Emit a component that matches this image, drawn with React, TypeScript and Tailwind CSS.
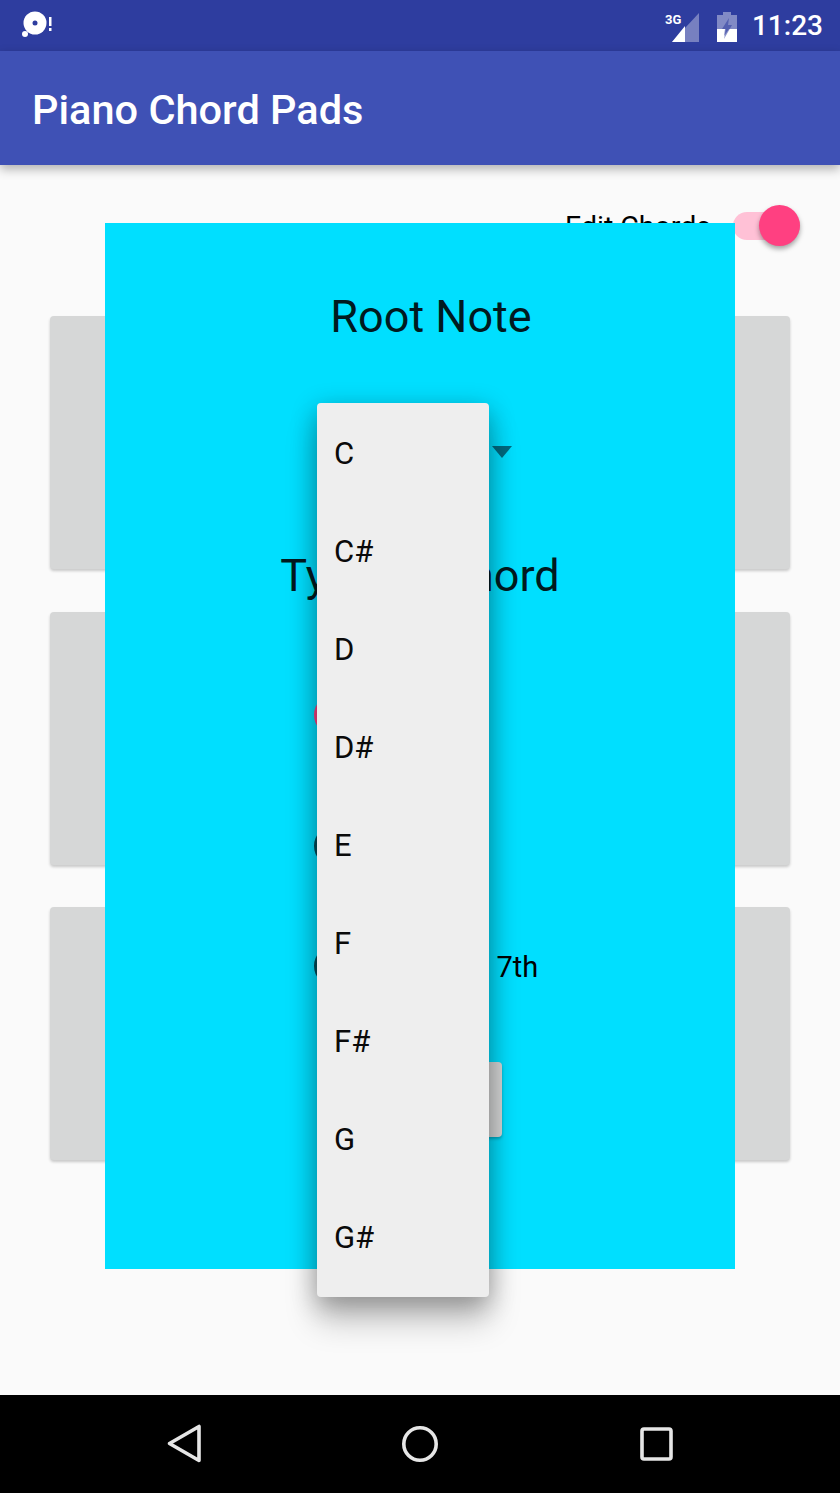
const notes = ['C', 'C#', 'D', 'D#', 'E', 'F', 'F#', 'G', 'G#']

function StatusIcons() {
  return (
    <div className="flex items-center">
      <svg width="35" height="30" viewBox="0 0 35 30" className="mt-[2px]">
        <path d="M34 1V30H7Z" fill="#fff" fillOpacity="0.35" />
        <path d="M20 14V30H7Z" fill="#fff" />
        <text x="0" y="12" fontSize="13" fontWeight="700" fill="#fff" fontFamily="Roboto, sans-serif">3G</text>
      </svg>
      <svg width="20" height="30" viewBox="0 0 20 30" className="ml-[17px] mt-[2px]">
        <path d="M6 0H14V3H20V30H0V3H6Z" fill="#fff" fillOpacity="0.4" />
        <path d="M0 17H8L7 24L12 17H20V30H0Z" fill="#fff" />
        <path d="M12 6L5 17H9L7 27L15 13H11Z" fill="#2e3d9f" fillOpacity="0.55" />
      </svg>
      <span className="ml-[15px] text-[28px] font-medium leading-none text-white">11:23</span>
    </div>
  )
}

function Radio({ active }: { active?: boolean }) {
  return (
    <span className={`flex h-[40px] w-[40px] shrink-0 items-center justify-center rounded-full border-[5px] ${active ? 'border-[#ff4081]' : 'border-[#004d5c]'}`}>
      {active && <span className="h-[20px] w-[20px] rounded-full bg-[#ff4081]" />}
    </span>
  )
}

export default function App() {
  return (
    <div className="relative flex h-[1493px] w-[840px] flex-col overflow-hidden font-['Roboto',sans-serif] text-black">
      <div className="flex h-[51px] items-center justify-between bg-[#2e3d9f] pl-[21px] pr-[17px]">
        <svg width="32" height="30" viewBox="0 0 32 30">
          <circle cx="14" cy="12" r="11.5" fill="#fff" />
          <circle cx="14" cy="12" r="2.5" fill="#2e3d9f" />
          <circle cx="4" cy="23" r="3" fill="#fff" />
          <rect x="28" y="6" width="2.5" height="9" fill="#fff" />
          <rect x="28" y="17" width="2.5" height="3" fill="#fff" />
        </svg>
        <StatusIcons />
      </div>

      <div className="z-10 flex h-[114px] items-center bg-[#3f51b5] pl-[32px] shadow-[0_4px_10px_rgba(0,0,0,0.3)]">
        <h1 className="mt-[5px] text-[41.5px] font-medium text-white">Piano Chord Pads</h1>
      </div>

      <main className="flex-1 bg-[#fafafa] px-[50px]">
        <div className="mt-[40px] flex h-[41px] items-center justify-end">
          <span className="pt-[4px] text-[28.5px]">Edit Chords</span>
          <div className="relative ml-[22px] -mr-[10px] h-[28px] w-[67px]">
            <div className="h-full w-full rounded-full bg-[#ffc1d6]" />
            <div className="absolute -top-[7px] right-0 h-[41px] w-[41px] rounded-full bg-[#ff4081] shadow-[0_3px_5px_rgba(0,0,0,0.35)]" />
          </div>
        </div>
        <div className="mt-[70px] flex flex-col">
          <div className="h-[253px] rounded-[4px] bg-[#d6d7d7] shadow-[0_2px_3px_rgba(0,0,0,0.2)]" />
          <div className="mt-[43px] h-[253px] rounded-[4px] bg-[#d6d7d7] shadow-[0_2px_3px_rgba(0,0,0,0.2)]" />
          <div className="mt-[42px] h-[253px] rounded-[4px] bg-[#d6d7d7] shadow-[0_2px_3px_rgba(0,0,0,0.2)]" />
        </div>
      </main>

      <div className="flex h-[98px] items-center bg-black pl-[166px]">
        <svg width="36" height="42" viewBox="0 0 36 42">
          <path d="M33 3.5V37.5L3.5 20.5Z" fill="none" stroke="#e6e6e6" strokeWidth="3.6" strokeLinejoin="round" />
        </svg>
        <svg width="38" height="38" viewBox="0 0 38 38" className="ml-[199px]">
          <circle cx="19" cy="19" r="16.2" fill="none" stroke="#e6e6e6" strokeWidth="3.6" />
        </svg>
        <svg width="34" height="38" viewBox="0 0 34 38" className="ml-[200px]">
          <rect x="3" y="4" width="29" height="30" rx="2" fill="none" stroke="#e6e6e6" strokeWidth="3.6" />
        </svg>
      </div>

      <div className="absolute left-[105px] top-[223px] z-20 flex h-[1046px] w-[630px] flex-col items-center bg-[#00dfff]">
        <p className="ml-[22px] mt-[66px] text-[45px] leading-[56px] text-[#001a20]">Root Note</p>
        <div className="ml-[164px] mt-[101px] h-0 w-0 border-x-[10px] border-t-[12px] border-x-transparent border-t-[#006a80]" />
        <p className="mt-[90px] text-[45px] leading-[56px] text-[#001a20]">Type of Chord</p>
        <div className="ml-[11px] mt-[91px] flex w-[223px] flex-col">
          <div className="flex h-[40px] items-center gap-[11px]">
            <Radio active />
            <span className="text-[29px]">Major</span>
          </div>
          <div className="mt-[91px] flex h-[40px] items-center gap-[11px]">
            <Radio />
            <span className="text-[29px]">Minor</span>
          </div>
          <div className="mt-[80px] flex h-[40px] items-center gap-[7px]">
            <Radio />
            <span className="whitespace-nowrap pt-[4px] text-[29px] [word-spacing:3px]">Dominant 7th</span>
          </div>
        </div>
        <button className="ml-[-2px] mt-[76px] h-[75px] w-[166px] rounded-[4px] bg-[#d6d7d7] text-[25px] shadow-[0_2px_3px_rgba(0,0,0,0.25)]">Save</button>

        <ul className="absolute left-[212px] top-[180px] h-[894px] w-[172px] rounded-[4px] bg-[#eeeeee] pt-[2px] shadow-[0_24px_32px_rgba(0,0,0,0.22),0_6px_26px_rgba(0,0,0,0.3)]">
          {notes.map(n => (
            <li key={n} className="flex h-[98px] items-center pl-[17px] text-[31px] text-[#0a0a0a]">{n}</li>
          ))}
        </ul>
      </div>
    </div>
  )
}
